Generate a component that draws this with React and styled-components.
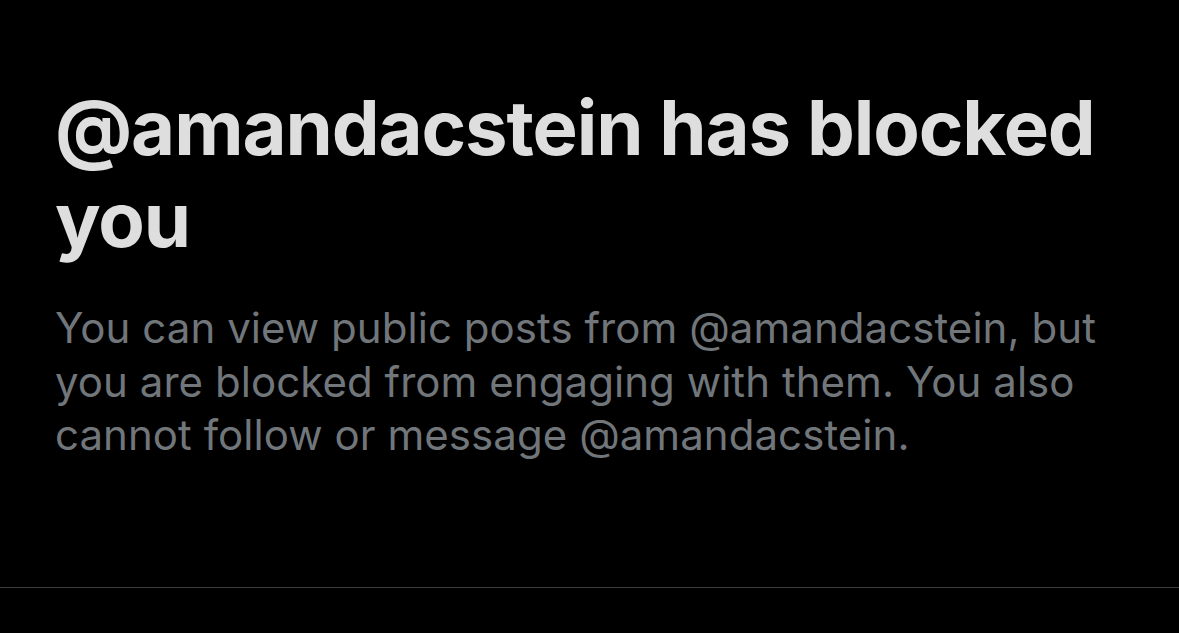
import React from 'react';
import styled, { createGlobalStyle } from 'styled-components';

const GlobalStyle = createGlobalStyle`
  html, body {
    margin: 0;
    padding: 0;
    background: #000;
  }
  body {
    font-family: Inter, "Liberation Sans", Arial, sans-serif;
    -webkit-font-smoothing: antialiased;
  }
`;

const Page = styled.div`
  width: 100%;
  min-height: 633px;
  background: #000;
`;

const Panel = styled.section`
  height: 588px;
  box-sizing: border-box;
  padding: 81px 55px 0;
  border-bottom: 1px solid #3a3d40;
`;

const Content = styled.div`
  max-width: 1070px;
`;

const Title = styled.h1`
  margin: 0;
  font-size: 76px;
  line-height: 92px;
  font-weight: 700;
  letter-spacing: -1.1px;
  color: #dedede;
`;

const Message = styled.p`
  margin: 36px 0 0;
  font-size: 42px;
  line-height: 53.5px;
  font-weight: 400;
  letter-spacing: 0.05px;
  color: #71767b;
`;

const App = () => {
  const handle = '@amandacstein';
  return (
    <Page>
      <GlobalStyle />
      <Panel>
        <Content>
          <Title>{handle} has blocked you</Title>
          <Message>
            You can view public posts from {handle}, but you are blocked from
            engaging with them. You also cannot follow or message {handle}.
          </Message>
        </Content>
      </Panel>
    </Page>
  );
};

export default App;
